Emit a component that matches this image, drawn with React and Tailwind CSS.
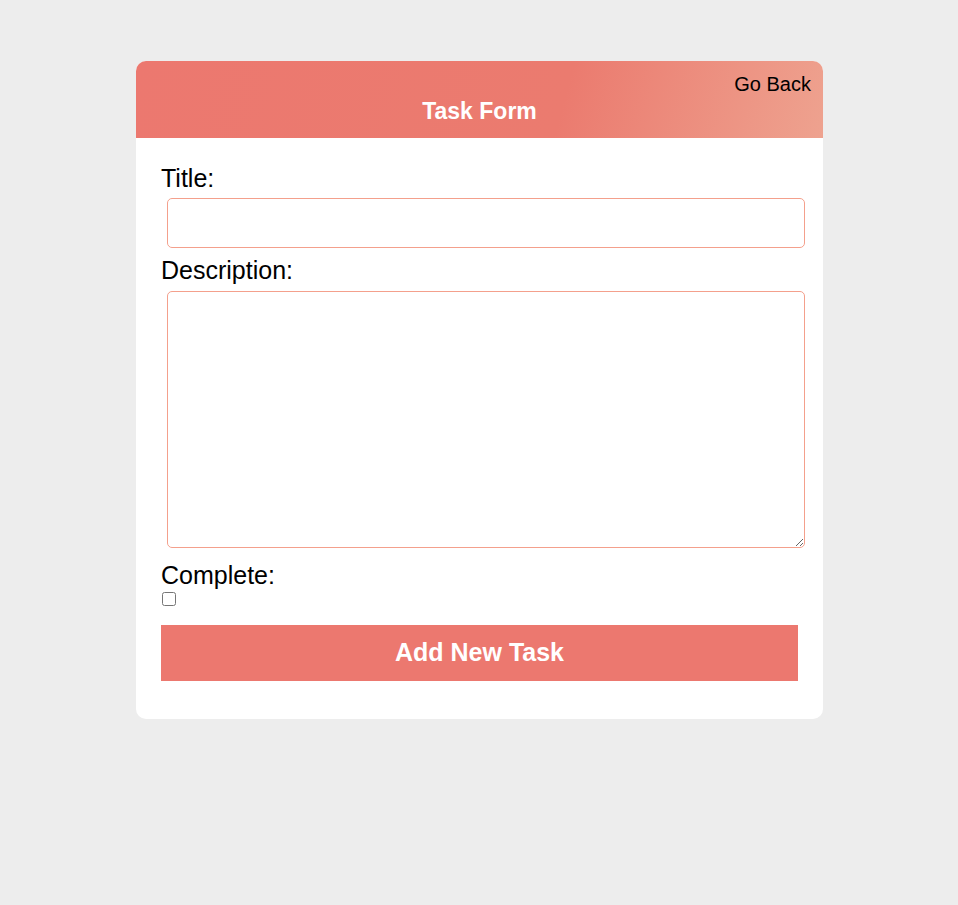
export default function App() {
    return (
        <div className="min-h-[905px] w-full bg-[#ededed] pt-[61px] font-['Liberation_Sans',Arial,sans-serif]">
            <div className="ml-[136px] w-[687px] overflow-hidden rounded-[10px] bg-white pb-[38px]">
                <header className="flex h-[77px] flex-col bg-[linear-gradient(105deg,#ec786f_0%,#eb7b6f_62%,#eea28f_100%)] px-[12px] pt-[12px]">
                    <div className="flex justify-end">
                        <button type="button" className="text-[20px] leading-[23px] text-black">
                            Go Back
                        </button>
                    </div>
                    <h1 className="mt-[3px] text-center text-[23px] font-bold leading-[25px] text-white">Task Form</h1>
                </header>

                <form className="px-[25px]" onSubmit={(e) => e.preventDefault()}>
                    <label className="mt-[26px] block text-[25px] leading-[28px] text-black">Title:</label>
                    <input
                        type="text"
                        className="ml-[6px] mt-[6px] block h-[50px] w-[638px] rounded-[5px] border border-[#f4a08c] px-2 outline-none"
                    />

                    <label className="mt-[8px] block text-[25px] leading-[28px] text-black">Description:</label>
                    <textarea className="ml-[6px] mt-[7px] block h-[257px] w-[638px] rounded-[5px] border border-[#f4a08c] px-2 outline-none" />

                    <label className="mt-[13px] block text-[25px] leading-[28px] text-black">Complete:</label>
                    <input type="checkbox" className="ml-[1px] mt-[3px] block h-[14px] w-[14px]" />

                    <button
                        type="submit"
                        className="mt-[19px] block h-[56px] w-full bg-[#ec786f] text-[25px] font-bold text-white"
                    >
                        Add New Task
                    </button>
                </form>
            </div>
        </div>
    )
}
